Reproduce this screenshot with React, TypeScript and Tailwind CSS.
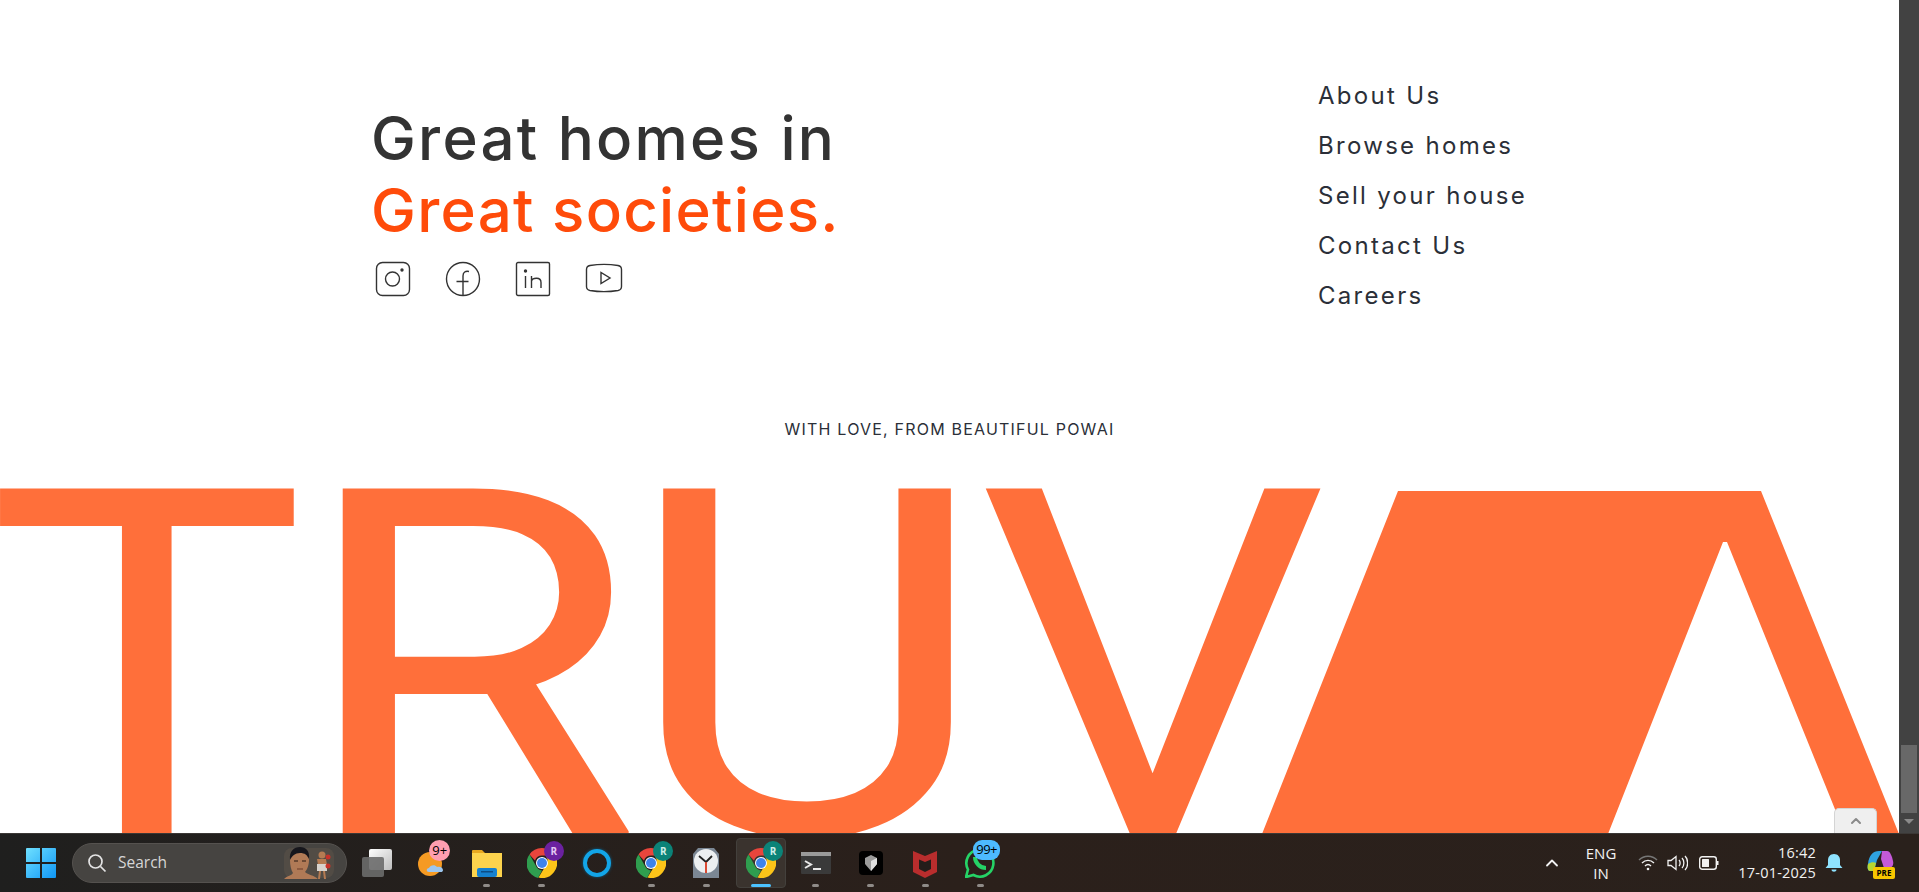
import { ChevronUp } from "lucide-react";

const heading = { fontFamily: "Inter, sans-serif" };

const navLinks = ["About Us", "Browse homes", "Sell your house", "Contact Us", "Careers"];

function Instagram() {
  return (
    <svg width="36" height="36" viewBox="0 0 36 36" fill="none" stroke="#333" strokeWidth="1.4">
      <rect x="1.5" y="1.5" width="33" height="33" rx="6" />
      <circle cx="17.5" cy="18" r="7" />
      <circle cx="27" cy="9" r="1" fill="#333" />
    </svg>
  );
}

function Facebook() {
  return (
    <svg width="36" height="36" viewBox="0 0 36 36" fill="none" stroke="#333" strokeWidth="1.4">
      <circle cx="18" cy="18" r="16.5" />
      <path d="M24 10.5c-3.500-.8-6 .6-6 4.500v19.500M11.500 20.500h12" />
    </svg>
  );
}

function Linkedin() {
  return (
    <svg width="36" height="36" viewBox="0 0 36 36" fill="none" stroke="#333" strokeWidth="1.4">
      <rect x="1.500" y="1.500" width="33" height="33" rx="1.500" />
      <circle cx="10.500" cy="10" r="1" fill="#333" />
      <path d="M10.500 15v12M16.500 27V15M16.500 20c1-3.500 9.500-4.500 9.500 1.500V27" />
    </svg>
  );
}

function Youtube() {
  return (
    <svg width="38" height="36" viewBox="0 0 38 36" fill="none" stroke="#333" strokeWidth="1.4">
      <path d="M5 4.500C14 3 24 3 33 4.500c2.500.5 3.500 2 3.500 4v17c0 2-1 3.500-3.500 4-9 1.500-19 1.500-28 0-2.500-.5-3.500-2-3.500-4v-17c0-2 1-3.500 3.500-4z" />
      <path d="M16 11.500v11l9-5.500z" />
    </svg>
  );
}

// the A of the wordmark is solid on its left side, so it is a drawing
function LogoA() {
  return (
    <svg width="501" height="343" viewBox="0 0 501 343" className="ml-[130px] shrink-0 overflow-visible">
      <polygon points="0,0 363,0 501,343 447,343 329,51 325,51 210,343 -136,343" fill="#ff6f3a" />
    </svg>
  );
}

function Letter({ className, children }: { className: string; children: string }) {
  return <span className={`block shrink-0 origin-top-left text-[#ff6f3a] ${className}`}>{children}</span>;
}

function Wordmark() {
  return (
    <div
      className="flex h-[343px] items-start text-[486px] leading-[355px] font-normal"
      style={{ fontFamily: "Roboto, sans-serif" }}
    >
      <Letter className="-ml-[13px] w-[309.500px] scale-x-[1.1]">T</Letter>
      <Letter className="w-[328.500px] scale-x-[1.14]">R</Letter>
      <Letter className="w-[353px] scale-x-[1.15]">U</Letter>
      <Letter className="w-[290px] scale-x-[1.13]">V</Letter>
      <LogoA />
    </div>
  );
}

function ScrollBar() {
  return (
    <div className="flex w-5 shrink-0 flex-col justify-end bg-[#424242] pb-[3px]">
      <div className="mx-[2px] h-[68px] bg-[#686868]" />
      <div className="flex h-[17px] items-center justify-center">
        <div className="h-0 w-0 border-x-[5px] border-t-[5px] border-x-transparent border-t-[#8a8a8a]" />
      </div>
    </div>
  );
}

function Badge({ bg, children, color = "#cfeee8" }: { bg: string; children: string; color?: string }) {
  return (
    <span
      className="absolute -top-[7px] -right-[7px] flex h-5 w-5 items-center justify-center rounded-full text-[10px] font-bold"
      style={{ background: bg, color }}
    >
      {children}
    </span>
  );
}

function Chrome({ badge, color }: { badge: string; color?: string }) {
  return (
    <div className="relative h-[30px] w-[30px]">
      <svg width="30" height="30" viewBox="0 0 30 30">
        <path d="M15 0a15 15 0 0 1 13 7.500H15a7.500 7.500 0 0 0-7 5L2.500 6.500A15 15 0 0 1 15 0z" fill="#e8453c" />
        <path d="M2.500 6.500 9 18a7.500 7.500 0 0 0 6 4.500L11 30A15 15 0 0 1 2.500 6.500z" fill="#2f9e4f" />
        <path d="M28 7.500A15 15 0 0 1 11.500 29.600L18.500 18a7.500 7.500 0 0 0 0-10.500z" fill="#fcc419" />
        <circle cx="15" cy="15" r="6" fill="#fff" />
        <circle cx="15" cy="15" r="5" fill="#3f83ea" />
      </svg>
      <Badge bg={badge} color={color}>R</Badge>
    </div>
  );
}

function Weather() {
  return (
    <div className="relative h-[30px] w-[30px]">
      <svg width="30" height="30" viewBox="0 0 30 30">
        <circle cx="13" cy="16" r="12" fill="#f59a23" />
        <path d="M12 24c-3 0-3-4 0-4 1-3 6-4 8-1 2-1 6 0 6 3 0 1.500-1 2-2 2z" fill="#9cc6ee" />
      </svg>
      <span className="absolute -top-[8px] left-[12px] flex h-[21px] w-[21px] items-center justify-center rounded-full bg-[#ff9eb0] text-[13px] text-black">
        9+
      </span>
    </div>
  );
}

function Folder() {
  return (
    <svg width="30" height="28" viewBox="0 0 30 28">
      <path d="M0 2a1 1 0 0 1 1-1h9l3 3h-13z" fill="#e8a820" />
      <rect y="4" width="30" height="24" fill="#fcd34d" />
      <rect x="5" y="19" width="20" height="9" rx="2" fill="#1581d0" />
      <rect x="9" y="22" width="12" height="1.500" fill="#0c4d86" />
    </svg>
  );
}

function Clock() {
  return (
    <svg width="26" height="30" viewBox="0 0 26 30">
      <path d="M5 0h16l5 6v24H0V6z" fill="#7b8794" />
      <circle cx="13" cy="13" r="12" fill="#eceff1" />
      <path d="M13 14 6 8M13 14l6-6" stroke="#222" strokeWidth="1.800" />
      <path d="M13 14v11" stroke="#d9381e" strokeWidth="1.800" />
    </svg>
  );
}

function Terminal() {
  return (
    <svg width="30" height="22" viewBox="0 0 30 22">
      <rect width="30" height="22" rx="1" fill="#3a3a3a" />
      <rect width="30" height="4" fill="#9a9a9a" />
      <path d="m4 9 6 3.500-6 3.500" fill="none" stroke="#e8e8e8" strokeWidth="2" />
      <rect x="12" y="16" width="8" height="2" fill="#e8e8e8" />
    </svg>
  );
}

function BoxApp() {
  return (
    <svg width="24" height="24" viewBox="0 0 24 24">
      <rect width="24" height="24" rx="4" fill="#000" />
      <path d="m12 4 6 3v6l-6 7-6-7V7z" fill="#9b9b9b" />
      <path d="m12 10 6-3v6l-6 7z" fill="#e0e0e0" />
    </svg>
  );
}

function Mcafee() {
  return (
    <svg width="24" height="30" viewBox="0 0 24 30">
      <path d="M0 3 12 8l12-5v21l-12 6-12-6z" fill="#b92d2d" />
      <path d="M6 11.500 12 14l6-2.500V21l-6 3-6-3z" fill="#241d1a" />
    </svg>
  );
}

function Whatsapp() {
  return (
    <div className="relative h-[30px] w-[30px]">
      <svg width="30" height="30" viewBox="0 0 30 30" fill="none">
        <path d="M1 29l2-7.500A13.500 13.500 0 1 1 8.500 27z" stroke="#25d366" strokeWidth="2.600" />
        <path d="M10 9c0 6 5 11 11 11" stroke="#25d366" strokeWidth="4" />
      </svg>
      <span className="absolute -top-[8px] left-[8px] flex h-5 w-[27px] items-center justify-center rounded-[9px] bg-[#4dbaff] text-[13px] tracking-[-0.5px] text-black">
        99+
      </span>
    </div>
  );
}

function TaskIcon({ children, dot = true, active = false }: { children: React.ReactNode; dot?: boolean; active?: boolean }) {
  return (
    <div className="relative flex h-[50px] w-[54.800px] shrink-0 items-center justify-center">
      {active && <div className="absolute inset-y-0 inset-x-[2.500px] rounded-[4px] border border-[#43403c] bg-[#3a332e]" />}
      <div className="relative">{children}</div>
      {dot && (
        <div
          className={`absolute bottom-[1px] h-[3px] rounded-full ${active ? "w-5 bg-[#4cc2ff]" : "w-[7px] bg-[#8f8b88]"}`}
        />
      )}
    </div>
  );
}

function SearchArt() {
  return (
    <svg width="50" height="34" viewBox="0 0 50 34" className="shrink-0">
      <rect x="0" y="2" width="50" height="30" rx="8" fill="#524c45" />
      <path d="M0 33c4-4 7-3 9-6-2-3-3-8-3-13 0-7 4-11 10-11s9 4 9 11c0 5-2 10-4 12 3 3 9 3 13 7z" fill="#b07a56" />
      <path d="M6 14C5 5 10 1 16 1s10 4 9 12c-2-4-4-6-9-6s-8 3-10 7z" fill="#16161c" />
      <path d="M10 15h4M18 15h4" stroke="#2a1a12" strokeWidth="1.200" />
      <path d="M13 23h6" stroke="#6a3a28" strokeWidth="1" />
      <circle cx="38" cy="9" r="3.500" fill="#b57b52" />
      <path d="M33 13h9l1 6h-9z" fill="#b57b52" />
      <rect x="33" y="18" width="10" height="7" fill="#d8d3cd" />
      <path d="M35 25h2l-1 8h-2zM41 25h-2l1 8h2z" fill="#b57b52" />
      <circle cx="44" cy="11" r="2.500" fill="#c8322a" />
      <circle cx="44" cy="20" r="2.500" fill="#c8322a" />
    </svg>
  );
}

function Taskbar() {
  return (
    <div
      className="flex h-[59px] shrink-0 items-center border-t border-[#3b3836] bg-gradient-to-r from-[#1f1f1e] via-[#2b201b] to-[#2a211c] text-[#f2f2f2]"
      style={{ fontFamily: "'Open Sans', sans-serif" }}
    >
      <svg width="30" height="30" viewBox="0 0 30 30" className="ml-[26px] shrink-0">
        <defs>
          <linearGradient id="win" x1="0" y1="0" x2="1" y2="1">
            <stop offset="0" stopColor="#6fe0ff" />
            <stop offset="1" stopColor="#0f96f5" />
          </linearGradient>
        </defs>
        <path d="M0 1a1 1 0 0 1 1-1h13v14H0zM16 0h13a1 1 0 0 1 1 1v13H16zM0 16h14v14H1a1 1 0 0 1-1-1zM16 16h14v13a1 1 0 0 1-1 1H16z" fill="url(#win)" />
      </svg>
      <div className="ml-[16px] flex h-10 w-[275px] shrink-0 items-center rounded-full border border-[#55524f] bg-[#464441] pr-[12px] pl-[14px]">
        <svg width="20" height="20" viewBox="0 0 20 20" fill="none" stroke="#e4e4e4" strokeWidth="1.700">
          <circle cx="8.500" cy="8.500" r="6.500" />
          <path d="m13.500 13.500 5 5" />
        </svg>
        <span className="ml-[11px] flex-1 text-[15.500px] text-[#d6d6d6]">Search</span>
        <SearchArt />
      </div>
      <div className="ml-[3px] flex items-center">
        <TaskIcon dot={false}>
          <div className="relative h-[28px] w-[30px]">
            <div className="absolute top-0 right-0 h-[21px] w-[23px] rounded-[2px] bg-gradient-to-br from-white to-[#bdbdbd]" />
            <div className="absolute bottom-0 left-0 h-[20px] w-[22px] rounded-[2px] bg-[#6c6c6c]/90" />
          </div>
        </TaskIcon>
        <TaskIcon dot={false}><Weather /></TaskIcon>
        <TaskIcon><Folder /></TaskIcon>
        <TaskIcon><Chrome badge="#6b21a0" color="#e3c8f2" /></TaskIcon>
        <TaskIcon dot={false}>
          <div className="h-[28px] w-[28px] rounded-full border-[4px] border-[#12a5e8] shadow-[0_0_3px_#0b5f88]" />
        </TaskIcon>
        <TaskIcon><Chrome badge="#0b8378" /></TaskIcon>
        <TaskIcon><Clock /></TaskIcon>
        <TaskIcon active><Chrome badge="#0b8378" /></TaskIcon>
        <TaskIcon><Terminal /></TaskIcon>
        <TaskIcon><BoxApp /></TaskIcon>
        <TaskIcon><Mcafee /></TaskIcon>
        <TaskIcon><Whatsapp /></TaskIcon>
      </div>
      <div className="ml-auto flex items-center">
        <ChevronUp size={20} strokeWidth={2.200} className="mr-[24px]" />
        <div className="mr-[22px] text-center text-[15px] leading-[20px]">
          ENG
          <br />
          IN
        </div>
        <svg width="20" height="18" viewBox="0 0 20 18" fill="none" stroke="#f2f2f2" strokeWidth="1.400" className="mr-[9px]">
          <path d="M1 6c5-5 13-5 18 0" stroke="#777" />
          <path d="M4 9c3.500-3.500 8.500-3.500 12 0M7 12c2-2 4-2 6 0" />
          <circle cx="10" cy="15" r="1.300" fill="#f2f2f2" stroke="none" />
        </svg>
        <svg width="21" height="18" viewBox="0 0 21 18" fill="none" stroke="#f2f2f2" strokeWidth="1.300" className="mr-[11px]">
          <path d="M1 6.500h3L9 2.500v13l-5-4H1z" />
          <path d="M12 6c1.500 1.500 1.500 4.500 0 6M15 4c2.500 2.500 2.500 7.500 0 10M18 2c3.500 3.500 3.500 10.500 0 14" />
        </svg>
        <svg width="20" height="14" viewBox="0 0 20 14" fill="none" className="mr-[19px]">
          <rect x="0.700" y="0.700" width="16.600" height="12.600" rx="2.500" stroke="#f2f2f2" strokeWidth="1.400" />
          <rect x="3" y="3" width="7" height="8" rx="0.500" fill="#f2f2f2" />
          <path d="M18 5h1.500v4H18z" fill="#f2f2f2" />
        </svg>
        <div className="text-right text-[14.500px] leading-[20px]">
          <div className="tracking-[0.2px]">16:42</div>
          <div className="tracking-[0.2px]">17-01-2025</div>
        </div>
        <svg width="18" height="20" viewBox="0 0 18 20" className="mr-[23px] ml-[9px]">
          <path d="M9 1c4 0 6 3 6 6v5l2.500 3H.5L3 12V7c0-3 2-6 6-6z" fill="#8fe3ff" />
          <path d="M6.500 16.500h5c0 3-5 3-5 0z" fill="#8fe3ff" />
        </svg>
        <div className="relative mr-[24px] h-[26px] w-[29px]">
          <svg width="29" height="24" viewBox="0 0 29 24">
            <path d="M2 14C3 5 7 1 13 1h3l-5 9-3 11H4c-2 0-3-3-2-7z" fill="#2fa3e0" />
            <path d="M16 1h5c3 0 5 5 6 10 1 4-1 7-4 7h-5l-3-9z" fill="#c45ad8" />
            <path d="M2 14c3-2 6-2 8-1l-2 8H4c-2 0-3-3-2-7z" fill="#b7d631" />
          </svg>
          <span className="absolute right-0 -bottom-[3px] flex h-[12px] w-[22px] items-center justify-center rounded-[2px] bg-[#f7c600] text-[8px] leading-none font-bold text-black">
            PRE
          </span>
        </div>
      </div>
    </div>
  );
}

export default function App() {
  return (
    <div className="flex h-[892px] flex-col overflow-hidden bg-white">
      <div className="flex min-h-0 flex-1">
        <main className="relative flex min-w-0 flex-1 flex-col overflow-hidden">
          <section className="flex items-start pt-[79px]" style={heading}>
            <div className="ml-[371px] w-[947px] shrink-0 pt-[23px]">
              <h2 className="text-[60px] leading-[72px] font-medium text-[#333333]">
                <span className="tracking-[2.250px]">Great homes in</span>
                <br />
                <span className="tracking-[1.300px] text-[#ff4b0a]">Great societies.</span>
              </h2>
              <div className="mt-[15px] flex items-center gap-[34px] pl-[4px]">
                <Instagram />
                <Facebook />
                <Linkedin />
                <Youtube />
              </div>
            </div>
            <nav className="flex flex-col gap-[16px] text-[24px] leading-[34px] tracking-[2.300px] text-[#2b2f38]">
              {navLinks.map((link) => (
                <a key={link}>{link}</a>
              ))}
            </nav>
          </section>
          <p className="mt-[104px] text-center text-[16px] leading-[24px] tracking-[1.200px] text-[#2b2f38] uppercase" style={heading}>
            With love, from beautiful Powai
          </p>
          <div className="mt-[50px] min-h-0 flex-1">
            <Wordmark />
          </div>
          <div className="absolute right-[22px] bottom-0 flex h-[25px] w-[43px] items-center justify-center rounded-t-[5px] border border-b-0 border-[#d4d4d4] bg-[#efefef]">
            <ChevronUp size={16} strokeWidth={3} className="text-[#8a8a8a]" />
          </div>
        </main>
        <ScrollBar />
      </div>
      <Taskbar />
    </div>
  );
}
